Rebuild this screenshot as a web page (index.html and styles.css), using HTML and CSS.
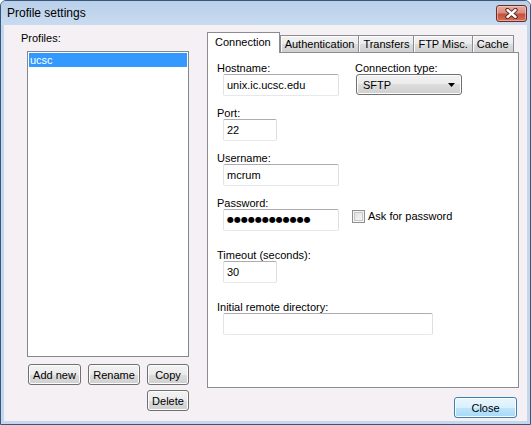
FILE: index.html
```html
<!DOCTYPE html>
<html lang="en">
<head>
  <meta charset="UTF-8" />
  <title>Profile settings</title>
  <link rel="stylesheet" href="styles.css">
</head>
<body>
  <div class="window">
    <div class="titlebar">
      <span class="title">Profile settings</span>
      <div class="close-x">
        <svg width="13" height="11" viewBox="0 0 13 11">
          <path d="M2.5 2l8 7M10.5 2l-8 7" stroke="#4a1b14" stroke-width="4.2" stroke-linecap="round" fill="none"/>
          <path d="M2.5 2l8 7M10.5 2l-8 7" stroke="#fff" stroke-width="2.4" stroke-linecap="round" fill="none"/>
        </svg>
      </div>
    </div>

    <div class="client">
      <div class="profiles">
        <div class="label">Profiles:</div>
        <div class="listbox">
          <div class="item selected">ucsc</div>
        </div>
        <div class="btn-grid">
          <button class="btn">Add new</button>
          <button class="btn">Rename</button>
          <button class="btn">Copy</button>
          <button class="btn delete">Delete</button>
        </div>
      </div>

      <div class="main">
        <div class="tabs">
          <div class="tab active">Connection</div>
          <div class="tab">Authentication</div>
          <div class="tab">Transfers</div>
          <div class="tab">FTP Misc.</div>
          <div class="tab">Cache</div>
        </div>
        <div class="panel">
          <div class="row-first">
            <div class="group host">
              <div class="label">Hostname:</div>
              <div class="field wide">unix.ic.ucsc.edu</div>
            </div>
            <div class="group">
              <div class="label">Connection type:</div>
              <div class="select">
                <span>SFTP</span>
                <svg width="7" height="4" viewBox="0 0 7 4"><path d="M0 0h7L3.5 4z" fill="#000"/></svg>
              </div>
            </div>
          </div>

          <div class="row">
            <div class="label">Port:</div>
            <div class="field short">22</div>
          </div>

          <div class="row">
            <div class="label">Username:</div>
            <div class="field wide">mcrum</div>
          </div>

          <div class="row">
            <div class="label">Password:</div>
            <div class="inline">
              <div class="field wide dots">●●●●●●●●●●●●</div>
              <label class="check"><span class="box"></span>Ask for password</label>
            </div>
          </div>

          <div class="row spaced">
            <div class="label">Timeout (seconds):</div>
            <div class="field short">30</div>
          </div>

          <div class="row spaced">
            <div class="label">Initial remote directory:</div>
            <div class="field long"></div>
          </div>
        </div>
        <div class="footer">
          <button class="btn default">Close</button>
        </div>
      </div>
    </div>
  </div>
</body>
</html>
```

FILE: styles.css
```css
body {
  margin: 0;
  background: #fff;
  font-family: "Liberation Sans", Arial, sans-serif;
  font-size: 11px;
  color: #000;
}
.window {
  width: 531px;
  height: 425px;
  box-sizing: border-box;
  border: 1px solid #3b5677;
  border-radius: 6px 6px 0 0;
  background: #c3d7ee;
  display: flex;
  flex-direction: column;
}
.titlebar {
  height: 24px;
  display: flex;
  justify-content: space-between;
  align-items: flex-start;
  padding: 0 3px 0 6px;
  background: linear-gradient(#b9d0ea, #c8dbf0);
  border-radius: 5px 5px 0 0;
}
.title {
  font-size: 12px;
  line-height: 24px;
}
.close-x {
  margin-top: 4px;
  width: 31px;
  height: 17px;
  box-sizing: border-box;
  border: 1px solid #6e2b22;
  border-radius: 3px;
  background: linear-gradient(#e6ac9f, #d98d7e 45%, #c4503d 55%, #d0705c);
  box-shadow: inset 0 0 0 1px rgba(255, 220, 210, 0.5);
  display: flex;
  align-items: center;
  justify-content: center;
}
.client {
  flex: 1;
  margin: 0 3px 3px;
  background: #f4f0f4;
  display: flex;
  padding: 7px 8px 3px 17px;
}
.label {
  line-height: 12px;
  white-space: nowrap;
}
.profiles {
  width: 186px;
}
.profiles .label {
  margin-bottom: 7px;
}
.listbox {
  margin-left: 6px;
  width: 162px;
  height: 306px;
  box-sizing: border-box;
  border: 1px solid #828790;
  background: #fff;
  padding: 1px;
}
.item {
  height: 14px;
  line-height: 14px;
  padding-left: 1px;
}
.item.selected {
  background: #3399ff;
  color: #fff;
}
.btn-grid {
  margin: 7px 0 0 7px;
  display: grid;
  grid-template-columns: 53px 52px 42px;
  gap: 5px 7px;
}
.btn {
  height: 21px;
  padding: 0;
  font-family: inherit;
  font-size: 11px;
  color: #000;
  border: 1px solid #707070;
  border-radius: 3px;
  background: linear-gradient(#f2f2f2, #ebebeb 50%, #dddddd 50%, #cfcfcf);
  box-shadow: inset 0 0 0 1px #fcfcfc;
}
.btn.delete {
  grid-column: 3;
}
.btn.default {
  width: 63px;
  margin-right: 2px;
  border-color: #3c7fb1;
  background: linear-gradient(#eaf6fd, #d9f0fc 50%, #bee6fd 50%, #a7d9f5);
}
.main {
  flex: 1;
  display: flex;
  flex-direction: column;
}
.tabs {
  display: flex;
  align-items: flex-end;
  height: 21px;
  margin-bottom: -1px;
  position: relative;
  z-index: 1;
}
.tab {
  height: 17px;
  line-height: 16px;
  margin-bottom: 1px;
  margin-left: -1px;
  padding: 0 4px;
  box-sizing: border-box;
  border: 1px solid #898c95;
  border-bottom: none;
  background: linear-gradient(#f2f2f2, #ebebeb 50%, #dddddd 50%, #cfcfcf);
  box-shadow: inset 1px 1px 0 #fcfcfc;
}
.tab.active {
  height: 21px;
  line-height: 18px;
  margin: 0;
  padding: 0 8px 0 7px;
  background: #fff;
  box-shadow: none;
}
.tab.active + .tab {
  margin-left: 0;
}
.panel {
  flex: 1;
  border: 1px solid #898c95;
  background: #fff;
  padding: 9px;
}
.row-first {
  display: flex;
}
.group.host {
  width: 138px;
}
.field {
  margin-left: 6px;
  height: 22px;
  box-sizing: border-box;
  border: 1px solid;
  border-color: #abadb3 #dbdfe6 #e3e9ef #e2e3ea;
  border-radius: 2px;
  background: #fff;
  padding: 0 3px;
  line-height: 20px;
  white-space: nowrap;
}
.field.wide {
  width: 116px;
}
.field.short {
  width: 54px;
}
.field.long {
  width: 210px;
}
.field.dots {
  font-family: "DejaVu Sans", sans-serif;
  font-size: 8px;
}
.select {
  margin-left: 1px;
  width: 106px;
  height: 21px;
  box-sizing: border-box;
  border: 1px solid #707070;
  border-radius: 3px;
  background: linear-gradient(#f2f2f2, #ebebeb 50%, #dddddd 50%, #cfcfcf);
  box-shadow: inset 0 0 0 1px #fcfcfc;
  display: flex;
  align-items: center;
  justify-content: space-between;
  padding: 0 6px 0 6px;
}
.row {
  margin-top: 11px;
}
.row.spaced {
  margin-top: 18px;
}
.inline {
  display: flex;
  align-items: flex-start;
}
.check {
  display: flex;
  align-items: center;
  margin: 1px 0 0 13px;
  line-height: 13px;
}
.box {
  width: 13px;
  height: 13px;
  box-sizing: border-box;
  border: 1px solid #8e8f8f;
  background: linear-gradient(135deg, #dcdcdc, #fbfbfb);
  box-shadow: inset 0 0 0 1px #f4f4f4, inset 0 0 0 2px #c8c8c8;
  margin-right: 3px;
}
.footer {
  display: flex;
  justify-content: flex-end;
  margin-top: 9px;
}
```
